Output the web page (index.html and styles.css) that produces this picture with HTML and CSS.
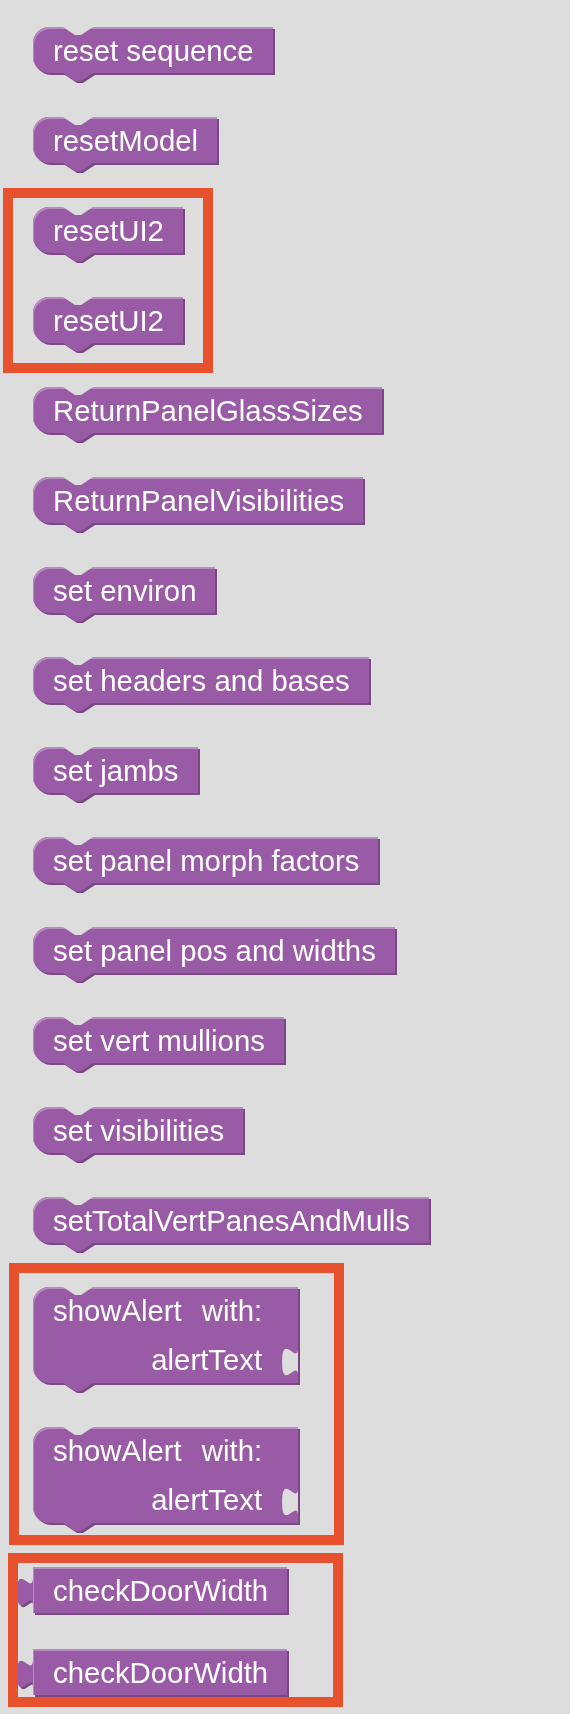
FILE: index.html
```html
<!DOCTYPE html>
<html lang="en">
<head>
    <meta charset="UTF-8">
    <meta name="viewport" content="width=device-width, initial-scale=1.0">
    <title>Procedures</title>
    <link rel="stylesheet" href="styles.css">
</head>
<body>

    <div class="flyout">
        <div class="block">reset sequence</div>
        <div class="block">resetModel</div>

        <div class="group group-reset">
            <div class="block">resetUI2</div>
            <div class="block">resetUI2</div>
        </div>

        <div class="block">ReturnPanelGlassSizes</div>
        <div class="block">ReturnPanelVisibilities</div>
        <div class="block">set environ</div>
        <div class="block">set headers and bases</div>
        <div class="block">set jambs</div>
        <div class="block">set panel morph factors</div>
        <div class="block">set panel pos and widths</div>
        <div class="block">set vert mullions</div>
        <div class="block">set visibilities</div>
        <div class="block">setTotalVertPanesAndMulls</div>

        <div class="group group-alert">
            <div class="block call">
                <div class="call-head">showAlert<span class="with">with:</span></div>
                <div class="call-arg">alertText</div>
                <span class="socket"></span>
            </div>
            <div class="block call">
                <div class="call-head">showAlert<span class="with">with:</span></div>
                <div class="call-arg">alertText</div>
                <span class="socket"></span>
            </div>
        </div>

        <div class="group group-check">
            <div class="block value">checkDoorWidth</div>
            <div class="block value">checkDoorWidth</div>
        </div>
    </div>

</body>
</html>
```

FILE: styles.css
```css
body {
    margin: 0;
    background-color: #dddddd;
    font-family: "Liberation Sans", Arial, sans-serif;
}

.flyout {
    display: flex;
    flex-direction: column;
    align-items: flex-start;
    padding: 27px 0 0 33px;
}

/* statement block: notch on top, tab below */
.block {
    position: relative;
    height: 46px;
    margin-bottom: 44px;
    padding: 0 19px 0 20px;
    line-height: 48px;
    font-size: 29.33px;
    color: #fff;
    white-space: nowrap;
    background-color: #995ba5;
    border-radius: 16px 0 0 16px;
    box-shadow: inset 1px 2px 0 #b88cc0;
    filter: drop-shadow(2px 2px 0 #7a4984);
}

.block:last-child {
    margin-bottom: 0;
}

.block::before {
    content: "";
    position: absolute;
    top: 0;
    left: 30px;
    width: 30px;
    height: 8px;
    background-color: #dddddd;
    clip-path: polygon(0 0, 100% 0, 18px 100%, 12px 100%);
}

.block::after {
    content: "";
    position: absolute;
    top: 100%;
    left: 30px;
    width: 30px;
    height: 8px;
    background-color: #995ba5;
    clip-path: polygon(0 0, 100% 0, 18px 100%, 12px 100%);
}

/* procedure call with an argument */
.call {
    display: flex;
    flex-direction: column;
    height: 96px;
    padding-right: 36px;
}

.call-head {
    height: 50px;
    line-height: 48px;
}

.call-head .with {
    margin-left: 20px;
}

.call-arg {
    height: 46px;
    line-height: 46px;
    text-align: right;
}

.socket {
    position: absolute;
    top: 60px;
    right: 0;
    width: 16px;
    height: 30px;
    background-color: #dddddd;
    clip-path: path("M16 30C16 10 0 46 0 15C0 -16 16 20 16 0Z");
}

/* value block: output tab on the left */
.value {
    margin-bottom: 36px;
    border-radius: 0;
}

.value::before {
    top: 10px;
    left: -16px;
    width: 16px;
    height: 30px;
    background-color: #995ba5;
    clip-path: path("M16 30C16 10 0 46 0 15C0 -16 16 20 16 0Z");
}

.value::after {
    display: none;
}

/* highlight frames */
.group {
    display: flex;
    flex-direction: column;
    align-items: flex-start;
    border: 10px solid #e8512d;
}

.group-reset {
    margin: -19px 0 14px -30px;
    padding: 9px 20px 20px 20px;
}

.group-alert {
    margin: -24px 0 8px -24px;
    padding: 14px 36px 12px 14px;
}

.group-check {
    margin: 0 0 0 -25px;
    padding: 4px 46px 2px 15px;
}
```
